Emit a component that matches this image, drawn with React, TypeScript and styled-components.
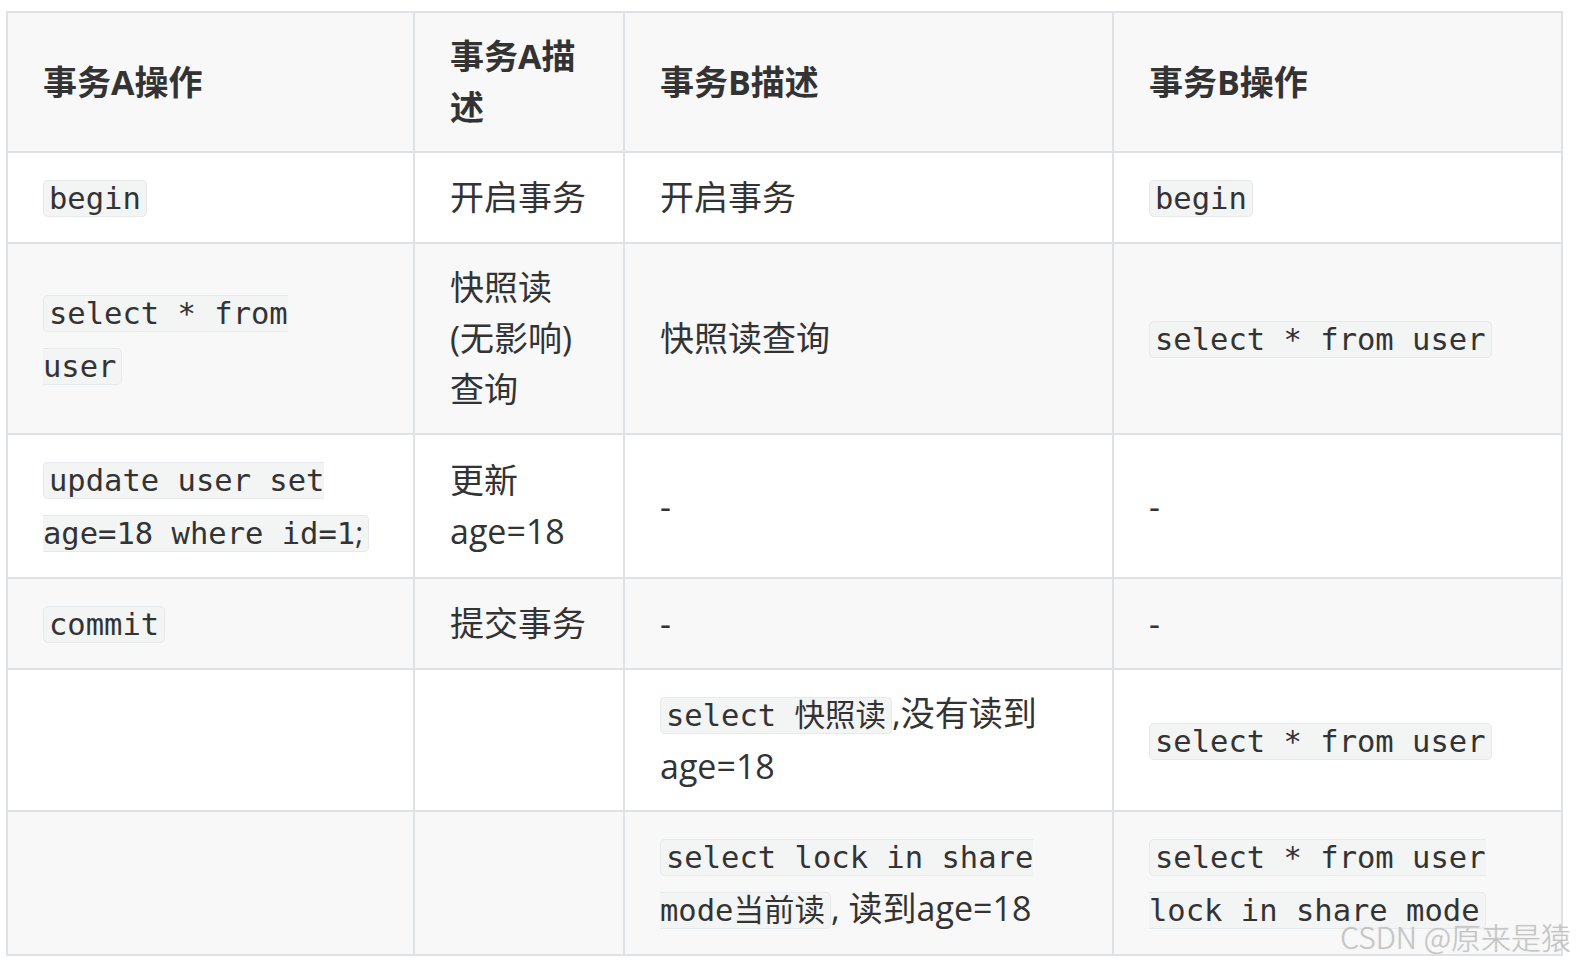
import styled, { createGlobalStyle } from "styled-components";

const GlobalStyle = createGlobalStyle`
    html, body {
        margin: 0;
        padding: 0;
        background: #ffffff;
    }
    body {
        width: 1577px;
        height: 965px;
        overflow: hidden;
    }
`

const Page = styled.div`
    position: relative;
    width: 1577px;
    height: 965px;
    padding: 11px 0 0 6px;
    box-sizing: border-box;
    font-family: "Open Sans", "Noto Sans CJK SC", sans-serif;
    color: #333333;
`

const Table = styled.table`
    border-collapse: collapse;
    table-layout: fixed;
    width: 1557px;
    font-size: 34px;
    line-height: 51px;
`

const Row = styled.tr<{ $shade?: boolean }>`
    background-color: ${(p) => (p.$shade ? "#f8f8f8" : "#ffffff")};
`

const Head = styled.th`
    border: 2px solid #dfe2e5;
    padding: 18px 35px;
    text-align: left;
    vertical-align: middle;
    font-weight: 700;
    background-color: #f8f8f8;
`

const Cell = styled.td`
    border: 2px solid #dfe2e5;
    padding: 18px 35px;
    text-align: left;
    vertical-align: middle;
    font-weight: 400;
`

const Code = styled.code`
    font-family: "DejaVu Sans Mono", "Noto Sans CJK SC", monospace;
    font-size: 30.5px;
    color: #333333;
    background-color: #f3f4f4;
    border: 1px solid #e7eaed;
    border-radius: 5px;
    padding: 0 5px;
`

// the semicolon in the source falls back to a proportional face
const Punct = styled.span`
    font-family: "Open Sans", sans-serif;
`

const Watermark = styled.div`
    position: absolute;
    right: 6px;
    bottom: 12px;
    font-family: "Noto Sans CJK SC", "Liberation Sans", sans-serif;
    font-size: 30px;
    font-weight: 300;
    line-height: 34px;
    color: rgba(195, 195, 195, 0.8);
    text-shadow: 0 0 1px rgba(120, 120, 120, 0.35);
    pointer-events: none;
`

export default function App() {
    return (
        <Page>
            <GlobalStyle />
            <Table>
                <colgroup>
                    <col style={{ width: 407 }} />
                    <col style={{ width: 210 }} />
                    <col style={{ width: 489 }} />
                    <col style={{ width: 449 }} />
                </colgroup>
                <thead>
                    <tr>
                        <Head>事务A操作</Head>
                        <Head>事务A描述</Head>
                        <Head>事务B描述</Head>
                        <Head>事务B操作</Head>
                    </tr>
                </thead>
                <tbody>
                    <Row>
                        <Cell><Code>begin</Code></Cell>
                        <Cell>开启事务</Cell>
                        <Cell>开启事务</Cell>
                        <Cell><Code>begin</Code></Cell>
                    </Row>
                    <Row $shade>
                        <Cell><Code>select * from user</Code></Cell>
                        <Cell>快照读(无影响)查询</Cell>
                        <Cell>快照读查询</Cell>
                        <Cell><Code>select * from user</Code></Cell>
                    </Row>
                    <Row>
                        <Cell><Code>update user set age=18 where id=1<Punct>;</Punct></Code></Cell>
                        <Cell>更新age=18</Cell>
                        <Cell>-</Cell>
                        <Cell>-</Cell>
                    </Row>
                    <Row $shade>
                        <Cell><Code>commit</Code></Cell>
                        <Cell>提交事务</Cell>
                        <Cell>-</Cell>
                        <Cell>-</Cell>
                    </Row>
                    <Row>
                        <Cell></Cell>
                        <Cell></Cell>
                        <Cell><Code>select 快照读</Code>,没有读到age=18</Cell>
                        <Cell><Code>select * from user</Code></Cell>
                    </Row>
                    <Row $shade>
                        <Cell></Cell>
                        <Cell></Cell>
                        <Cell><Code>select lock in share mode当前读</Code>, 读到age=18</Cell>
                        <Cell><Code>select * from user lock in share mode</Code></Cell>
                    </Row>
                </tbody>
            </Table>
            <Watermark>CSDN @原来是猿</Watermark>
        </Page>
    );
}
